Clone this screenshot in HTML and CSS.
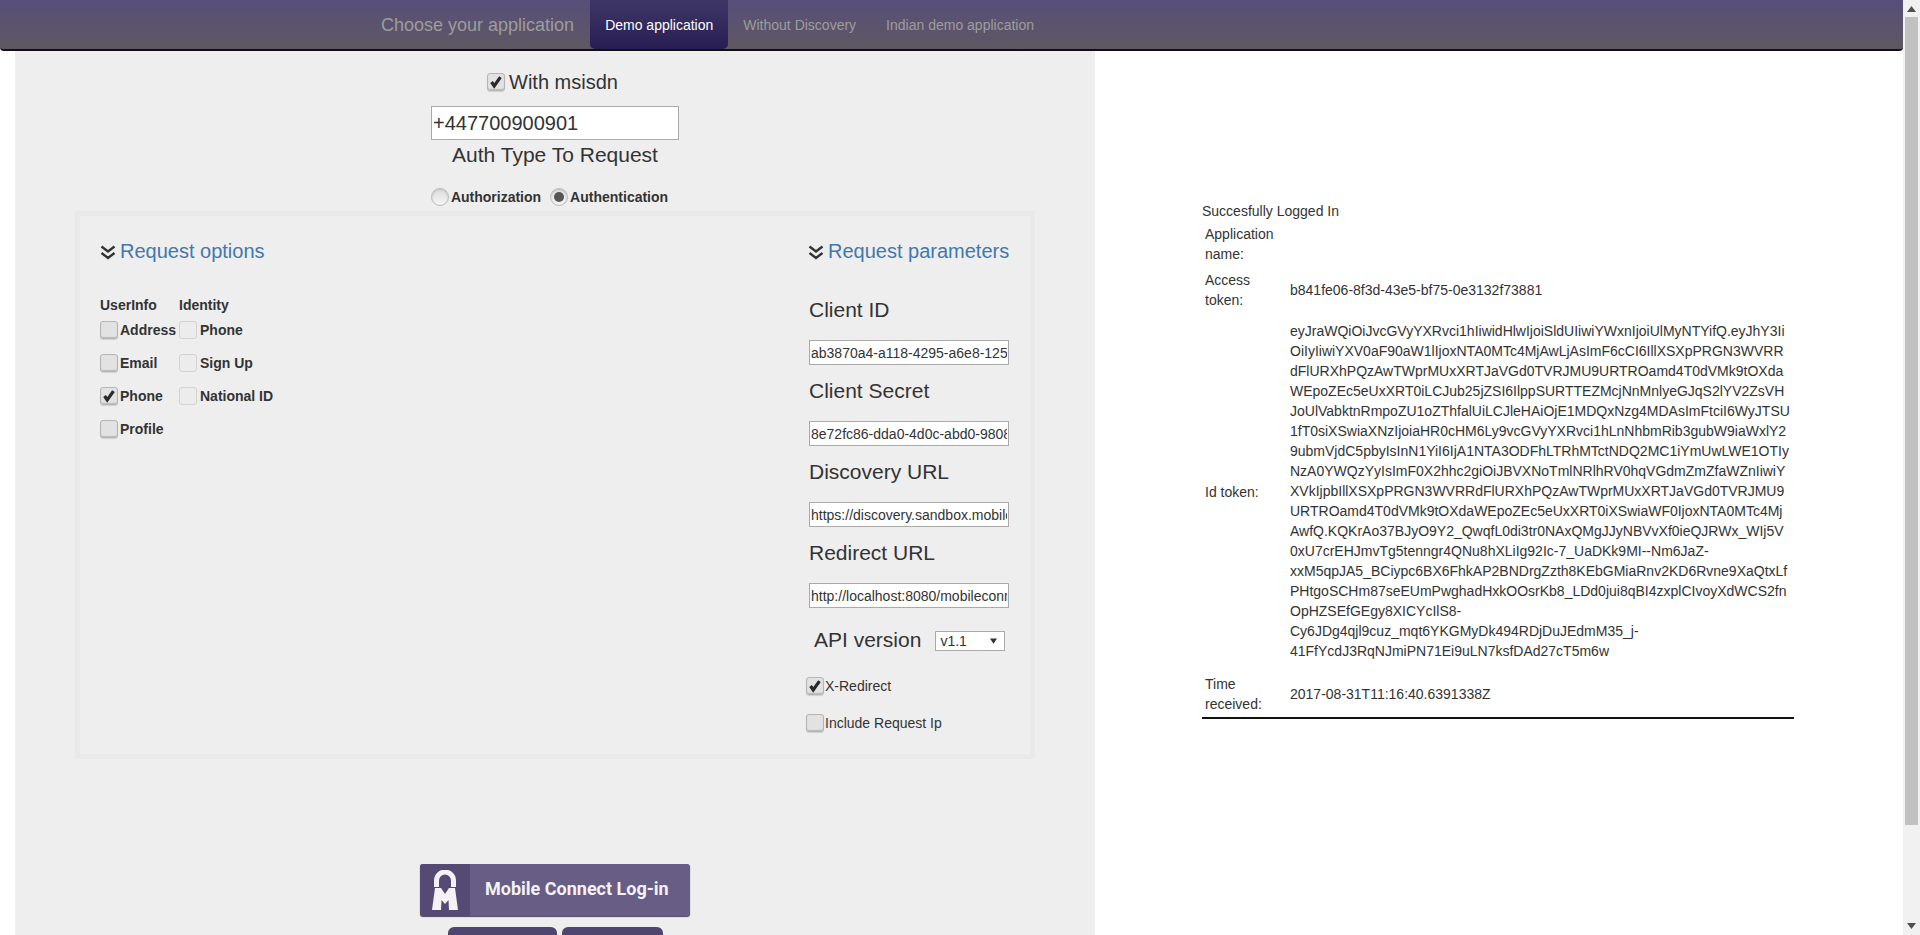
FILE: index.html
```html
<!DOCTYPE html>
<html lang="en">
<head>
<meta charset="utf-8">
<title>Mobile Connect Demo</title>
<link rel="stylesheet" href="styles.css">
</head>
<body>
<div class="page">
  <nav class="navbar">
    <span class="brand">Choose your application</span>
    <a class="tab active">Demo application</a>
    <a class="tab">Without Discovery</a>
    <a class="tab">Indian demo application</a>
  </nav>
  <div class="content">
    <main class="left">
      <div class="msisdn-row">
        <span class="cb on"><svg viewBox="0 0 18 18"><path d="M4 9 7 13.5 14 3.5" class="tick"/></svg></span>
        <span>With msisdn</span>
      </div>
      <input class="msisdn" type="text" value="+447700900901">
      <div class="auth-title">Auth Type To Request</div>
      <div class="auth-row">
        <span class="radio"></span><b>Authorization</b>
        <span class="radio on"></span><b>Authentication</b>
      </div>
      <section class="well">
        <div class="col-options">
          <h3 class="head"><svg class="chev" viewBox="0 0 16 16"><path d="M1.5 2 8 7 14.5 2M1.5 8.5 8 13.5 14.5 8.5"/></svg>Request options</h3>
          <div class="opts">
            <div class="opt-col">
              <div class="opt-title">UserInfo</div>
              <label class="opt"><span class="cb"></span>Address</label>
              <label class="opt"><span class="cb"></span>Email</label>
              <label class="opt"><span class="cb on"><svg viewBox="0 0 18 18"><path d="M4 9 7 13.5 14 3.5" class="tick"/></svg></span>Phone</label>
              <label class="opt"><span class="cb"></span>Profile</label>
            </div>
            <div class="opt-col">
              <div class="opt-title">Identity</div>
              <label class="opt"><span class="cb faint"></span>Phone</label>
              <label class="opt"><span class="cb faint"></span>Sign Up</label>
              <label class="opt"><span class="cb faint"></span>National ID</label>
            </div>
          </div>
        </div>
        <div class="col-params">
          <h3 class="head head-r"><svg class="chev" viewBox="0 0 16 16"><path d="M1.5 2 8 7 14.5 2M1.5 8.5 8 13.5 14.5 8.5"/></svg>Request parameters</h3>
          <div class="field-label first">Client ID</div>
          <input class="field" type="text" value="ab3870a4-a118-4295-a6e8-125a8c0e8b7c">
          <div class="field-label">Client Secret</div>
          <input class="field" type="text" value="8e72fc86-dda0-4d0c-abd0-9808e8f2a1b3">
          <div class="field-label">Discovery URL</div>
          <input class="field" type="text" value="https://discovery.sandbox.mobileconnect.io/v2/discovery">
          <div class="field-label">Redirect URL</div>
          <input class="field" type="text" value="http://localhost:8080/mobileconnect/callback">
          <div class="api-row">
            <span>API version</span>
            <span class="select">v1.1<svg viewBox="0 0 8 6"><path d="M0 0H8L4 6Z"/></svg></span>
          </div>
          <label class="check-line first"><span class="cb on"><svg viewBox="0 0 18 18"><path d="M4 9 7 13.5 14 3.5" class="tick"/></svg></span>X-Redirect</label>
          <label class="check-line"><span class="cb"></span>Include Request Ip</label>
        </div>
      </section>
      <a class="mc-btn">
        <span class="mc-icon"><svg viewBox="0 0 26 40"><path class="mc-arch" d="M4.5 17V10.5a8.500 8.500 0 0 1 17 0V17"/><path class="mc-m" d="M3 18H9L13 24 17 18H23L26 40H17L16.500 30 13 34 9.500 30 9 40H0Z"/></svg></span>
        <span class="mc-text">Mobile Connect Log-in</span>
      </a>
      <div class="bottom-btns"><span class="small-btn one"></span><span class="small-btn two"></span></div>
    </main>
    <aside class="right">
      <div class="result">
        <div class="status">Succesfully Logged In</div>
        <table class="tokens">
          <tr><th>Application name:</th><td></td></tr>
          <tr><th>Access token:</th><td>b841fe06-8f3d-43e5-bf75-0e3132f73881</td></tr>
          <tr><th>Id token:</th><td class="token">eyJraWQiOiJvcGVyYXRvci1hIiwidHlwIjoiSldUIiwiYWxnIjoiUlMyNTYifQ.eyJhY3Ii<br>OiIyIiwiYXV0aF90aW1lIjoxNTA0MTc4MjAwLjAsImF6cCI6IllXSXpPRGN3WVRR<br>dFlURXhPQzAwTWprMUxXRTJaVGd0TVRJMU9URTROamd4T0dVMk9tOXda<br>WEpoZEc5eUxXRT0iLCJub25jZSI6IlppSURTTEZMcjNnMnlyeGJqS2lYV2ZsVH<br>JoUlVabktnRmpoZU1oZThfalUiLCJleHAiOjE1MDQxNzg4MDAsImFtciI6WyJTSU<br>1fT0siXSwiaXNzIjoiaHR0cHM6Ly9vcGVyYXRvci1hLnNhbmRib3gubW9iaWxlY2<br>9ubmVjdC5pbyIsInN1YiI6IjA1NTA3ODFhLTRhMTctNDQ2MC1iYmUwLWE1OTIy<br>NzA0YWQzYyIsImF0X2hhc2giOiJBVXNoTmlNRlhRV0hqVGdmZmZfaWZnIiwiY<br>XVkIjpbIllXSXpPRGN3WVRRdFlURXhPQzAwTWprMUxXRTJaVGd0TVRJMU9<br>URTROamd4T0dVMk9tOXdaWEpoZEc5eUxXRT0iXSwiaWF0IjoxNTA0MTc4Mj<br>AwfQ.KQKrAo37BJyO9Y2_QwqfL0di3tr0NAxQMgJJyNBVvXf0ieQJRWx_WIj5V<br>0xU7crEHJmvTg5tenngr4QNu8hXLiIg92Ic-7_UaDKk9MI--Nm6JaZ-<br>xxM5qpJA5_BCiypc6BX6FhkAP2BNDrgZzth8KEbGMiaRnv2KD6Rvne9XaQtxLf<br>PHtgoSCHm87seEUmPwghadHxkOOsrKb8_LDd0jui8qBI4zxplCIvoyXdWCS2fn<br>OpHZSEfGEgy8XICYcIlS8-<br>Cy6JDg4qjl9cuz_mqt6YKGMyDk494RDjDuJEdmM35_j-<br>41FfYcdJ3RqNJmiPN71Ei9uLN7ksfDAd27cT5m6w</td></tr>
          <tr><th>Time received:</th><td>2017-08-31T11:16:40.6391338Z</td></tr>
        </table>
        <div class="rule"></div>
      </div>
    </aside>
  </div>
</div>
<div class="scrollbar">
  <svg class="arrow" viewBox="0 0 9 6"><path d="M4.5 0 9 6H0Z"/></svg>
  <div class="thumb"></div>
  <svg class="arrow" viewBox="0 0 9 6"><path d="M0 0H9L4.5 6Z"/></svg>
</div>
</body>
</html>
```
FILE: styles.css
```css
* { box-sizing: border-box; }
html, body { height: 100%; }
body {
  margin: 0;
  display: flex;
  height: 935px;
  overflow: hidden;
  background: #fff;
  font-family: "Liberation Sans", Arial, sans-serif;
  color: #333;
}
.page { width: 1903px; height: 935px; overflow: hidden; flex: none; }
.navbar {
  height: 51px;
  display: flex;
  align-items: stretch;
  padding-left: 381px;
  background: linear-gradient(#574f78, #5f5862);
  border-bottom: 2px solid #111;
  border-radius: 0 0 4px 4px;
}
.brand { font-size: 18px; color: #9d9d9d; line-height: 50px; padding-right: 16px; }
.tab { font-size: 14px; color: #9d9d9d; line-height: 50px; padding: 0 15px; }
.tab.active {
  color: #fff;
  border-radius: 0 0 5px 5px;
  background: linear-gradient(#3f3768, #271d52);
}
.content { display: flex; }
.left {
  width: 1080px;
  margin-left: 15px;
  height: 884px;
  background: #eee;
  display: flex;
  flex-direction: column;
  align-items: center;
  flex: none;
  overflow: hidden;
}
.left > * { flex: none; }
.msisdn-row { display: flex; align-items: center; gap: 4px; font-size: 20px; margin-top: 19px; height: 24px; margin-right: 5px; }
.msisdn {
  width: 248px; height: 34px; margin: 12px 0 0;
  font: 20px "Liberation Sans", Arial, sans-serif;
  color: #333; border: 1px solid #aaa; padding: 0 1px; background: #fff; outline: 0;
}
.auth-title { font-size: 21px; line-height: 28px; margin-top: 1px; }
.auth-row { display: flex; align-items: center; font-size: 14px; margin-top: 17px; height: 22px; margin-right: 11px; }
.auth-row b { margin: 0 9px 0 2px; }
.auth-row b:last-child { margin-right: 0; }
.radio {
  width: 18px; height: 18px; border-radius: 50%;
  border: 1px solid #bbb;
  background: linear-gradient(#dedede, #f4f4f4);
  box-shadow: inset 0 1px 2px rgba(0,0,0,.15);
  display: flex; align-items: center; justify-content: center;
}
.radio.on::before { content: ""; width: 10px; height: 10px; border-radius: 50%; background: #555; }
.cb {
  width: 18px; height: 18px; flex: none;
  border: 1px solid #b5b5b5; border-radius: 3px;
  background: #e2e2e2;
  box-shadow: inset 0 -1px 1px rgba(0,0,0,.18), 0 1px 1px rgba(0,0,0,.12);
  display: inline-block;
}
.cb.faint { background: #ececec; border-color: #d2d2d2; box-shadow: none; }
.cb svg { display: block; width: 100%; height: 100%; }
.tick { fill: none; stroke: #2a2a2a; stroke-width: 3.6; }
.well {
  width: 960px;
  height: 548px;
  margin-top: 3px;
  border: 5px solid #e9e9e9;
  display: flex;
  justify-content: space-between;
  padding: 0 15px 0 20px;
}
.head { margin: 0; font-size: 20px; font-weight: 400; color: #4278ad; display: flex; align-items: center; gap: 4px; height: 24px; }
.col-options .head { margin-top: 23px; }
.col-params { width: 206px; }
.col-params .head { margin-top: 23px; white-space: nowrap; margin-left: -1px; }
.chev { width: 16px; height: 17px; margin-top: 3px; fill: none; stroke: #333; stroke-width: 2.4; flex: none; }
.opts { display: flex; margin-top: 34px; font-size: 14px; font-weight: 700; }
.opt-col { display: flex; flex-direction: column; width: 79px; }
.opt-title { line-height: 16px; height: 16px; }
.opt { display: flex; align-items: center; height: 33px; gap: 2px; white-space: nowrap; }
.opt-col:last-child .opt { gap: 3px; }
.field-label { font-size: 21px; line-height: 24px; margin-top: 14px; }
.field-label.first { margin-top: 35px; }
.field {
  display: block; width: 200px; height: 25px; margin: 18px 0 0;
  font: 14px "Liberation Sans", Arial, sans-serif;
  color: #333; border: 1px solid #aaa; padding: 0 1px; background: #fff; outline: 0;
}
.api-row { display: flex; align-items: center; font-size: 21px; margin: 19px 0 0 5px; height: 26px; }
.select {
  margin-left: 14px; width: 70px; height: 20px; margin-top: 2px;
  border: 1px solid #aaa; background: #fff; font-size: 14px; padding-left: 4px;
  display: flex; align-items: center; justify-content: space-between; padding-right: 7px;
}
.select svg { width: 7px; height: 6px; fill: #333; }
.check-line { display: flex; align-items: center; font-size: 14px; height: 24px; margin: 13px 0 0 -3px; gap: 1px; white-space: nowrap; }
.check-line.first { margin-top: 21px; }
.mc-btn {
  margin-top: 105px; width: 270px; height: 52px;
  display: flex; background: #675d85; border-radius: 3px;
  box-shadow: 0 1px 1px #4a4266;
  color: #f4f2f8; font-family: Roboto, sans-serif; font-weight: 700;
}
.mc-icon { width: 50px; background: #544a74; border-radius: 3px 0 0 3px; display: flex; align-items: center; justify-content: center; }
.mc-icon svg { width: 26px; height: 40px; }
.mc-arch { fill: none; stroke: #f4f2f8; stroke-width: 5; }
.mc-m { fill: #f4f2f8; }
.mc-text { font-size: 18px; line-height: 50px; padding-left: 15px; white-space: nowrap; }
.bottom-btns { display: flex; gap: 5px; margin-top: 11px; }
.small-btn { height: 30px; background: #4f4670; border-radius: 6px 6px 0 0; }
.small-btn.one { width: 109px; }
.small-btn.two { width: 101px; }
.right { flex: 1; padding: 152px 0 0 107px; }
.result { width: 592px; font-size: 14px; line-height: 20px; }
.status { line-height: 20px; margin-top: -2px; }
.tokens { border-collapse: collapse; width: 100%; table-layout: fixed; }
.tokens th { width: 88px; font-weight: 400; text-align: left; padding: 3px 20px 3px 3px; vertical-align: middle; }
.tokens td { padding: 3px 0; vertical-align: middle; white-space: nowrap; }
.tokens td.token { padding: 8px 0 10px; }
.rule { height: 2px; background: #111; }
.scrollbar {
  width: 17px; height: 935px; background: #f1f1f1; flex: none;
  display: flex; flex-direction: column; align-items: center; justify-content: space-between;
  padding: 6px 0;
  position: relative;
}
.arrow { width: 9px; height: 6px; fill: #505050; }
.thumb { position: absolute; top: 17px; left: 2px; width: 13px; height: 808px; background: #c1c1c1; }
```
